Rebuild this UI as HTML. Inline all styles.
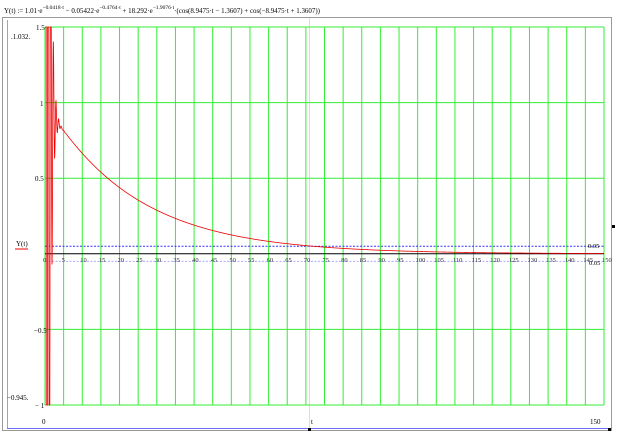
<!DOCTYPE html>
<html><head><meta charset="utf-8"><style>
body{margin:0;width:617px;height:435px;background:#fff;overflow:hidden;font-family:"Liberation Serif",serif}
svg text{font-family:"Liberation Serif",serif}
</style></head><body>
<svg id="s" width="617" height="435" xmlns="http://www.w3.org/2000/svg">
<text x="4" y="13" font-size="7" fill="#000" textLength="316" lengthAdjust="spacingAndGlyphs">Y(t) := 1.01·e<tspan dy="-4" font-size="5.5">−0.0418·t</tspan><tspan dy="4"> − 0.05422·e</tspan><tspan dy="-4" font-size="5.5">−0.4764·t</tspan><tspan dy="4"> + 18.292·e</tspan><tspan dy="-4" font-size="5.5">−1.9076·t</tspan><tspan dy="4">·(cos(8.9475·t − 1.3607) + cos(−8.9475·t + 1.3607))</tspan></text>
<rect x="2.5" y="17.5" width="609" height="413" fill="none" stroke="#999" stroke-width="1"/>
<line x1="7.5" y1="20" x2="7.5" y2="428" stroke="#9999ff"/>
<line x1="7" y1="428.5" x2="611" y2="428.5" stroke="#6f6fff"/>
<line x1="309.5" y1="18" x2="309.5" y2="431" stroke="#ddd"/>
<g id="grid" stroke="#33ee33" stroke-width="1"></g>
<line x1="45" y1="253.8" x2="604" y2="253.8" stroke="#000"/>
<line x1="45" y1="246.2" x2="604" y2="246.2" stroke="#3333ff" stroke-dasharray="2,1.5"/>
<line x1="45" y1="261.4" x2="604" y2="261.4" stroke="#aaaaff" stroke-dasharray="2,1.5"/>
<g id="lab" font-size="6.5" fill="#333"></g>
<path id="c" fill="none" stroke="#e00" stroke-width="0.8"/>
<text x="36" y="30" font-size="7">1.5</text>
<text x="40" y="106" font-size="7">1</text>
<text x="35" y="181" font-size="7">0.5</text>
<text x="34" y="333" font-size="7">−0.5</text>
<text x="35" y="408" font-size="7">− 1</text>
<text x="11" y="39" font-size="7">.1.032.</text>
<text x="7" y="400" font-size="7">−0.945.</text>
<text x="16" y="246" font-size="7">Y(t)</text>
<line x1="15" y1="249" x2="28" y2="249" stroke="#e00"/>
<text x="588" y="248" font-size="6.5">0.05</text>
<text x="589" y="265" font-size="6.5">0.05</text>
<text x="42" y="424" font-size="7">0</text>
<text x="311" y="424" font-size="7">t</text>
<text x="590" y="424" font-size="7">150</text>
<rect x="612" y="225" width="3" height="3" fill="#000"/>
<rect x="308" y="428" width="3" height="3" fill="#000"/>
<rect x="608" y="428" width="3" height="3" fill="#000"/>
</svg>
<script>
var X0=45,X1=604,sx=(X1-X0)/150,Y0=253.8,sy=151.2;
var g=document.getElementById('grid'),l=document.getElementById('lab'),ns="http://www.w3.org/2000/svg";
function el(p,t,a){var e=document.createElementNS(ns,t);for(var k in a)e.setAttribute(k,a[k]);p.appendChild(e);return e;}
for(var i=0;i<=30;i++){var x=X0+i*5*sx;el(g,'line',{x1:x,y1:27,x2:x,y2:405});
var t=el(l,'text',{x:x-2,y:262});t.textContent=i*5;}
[-1,-0.5,0.5,1,1.5].forEach(function(v){var y=Y0-v*sy;el(g,'line',{x1:X0,y1:y,x2:X1,y2:y});});
var d="";for(var t=0;t<=150;t+=0.02){var v=1.01*Math.exp(-0.0418*t)-0.05422*Math.exp(-0.4764*t)+36.584*Math.exp(-1.9076*t)*Math.cos(8.9475*t-1.3607);
var y=Y0-v*sy;y=Math.max(27,Math.min(405,y));d+=(d?"L":"M")+(X0+t*sx).toFixed(2)+","+y.toFixed(2);}
document.getElementById('c').setAttribute('d',d);
</script>
</body></html>
